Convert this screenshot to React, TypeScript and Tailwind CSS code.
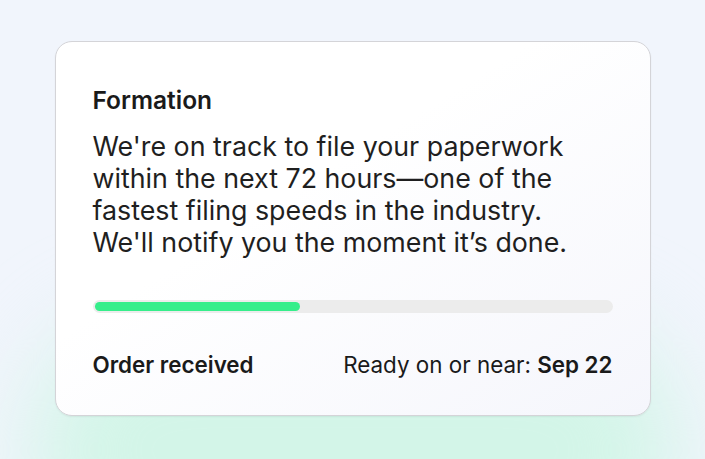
import React from 'react';

const App = () => {
  return (
    <div className="relative w-[705px] h-[459px] overflow-hidden bg-[#f1f5fc] font-['Inter',sans-serif]">
      <div className="absolute left-[30px] top-[320px] w-[650px] h-[260px] rounded-full bg-[#d3f5e8] blur-[45px] pointer-events-none" />
      <div className="relative flex justify-center pt-[41px]">
        <div className="w-[596px] h-[375px] rounded-[17px] border border-[#d4d4d8] bg-gradient-to-br from-white from-40% to-[#f5f6fc] shadow-[0_1px_2px_rgba(0,0,0,0.06)] px-[37px] pt-[43px] flex flex-col">
          <h2 className="text-[24.5px] leading-[30px] font-semibold text-[#1a1a1a]">Formation</h2>
          <p className="mt-[15px] text-[26.8px] leading-[32px] text-[#1f1f1f] whitespace-nowrap">
            We're on track to file your paperwork<br />
            within the next 72 hours—one of the<br />
            fastest filing speeds in the industry.<br />
            We'll notify you the moment it’s done.
          </p>
          <div className="mt-[42px] h-[13px] rounded-full bg-[#ececec] p-[2px]">
            <div className="h-full w-[205px] rounded-full bg-[#36ee8b]" />
          </div>
          <div className="mt-[38px] flex items-baseline justify-between text-[22.4px] leading-[28px] text-[#1a1a1a]">
            <span className="font-semibold">Order received</span>
            <span>Ready on or near: <span className="font-semibold">Sep 22</span></span>
          </div>
        </div>
      </div>
    </div>
  );
};

export default App;
